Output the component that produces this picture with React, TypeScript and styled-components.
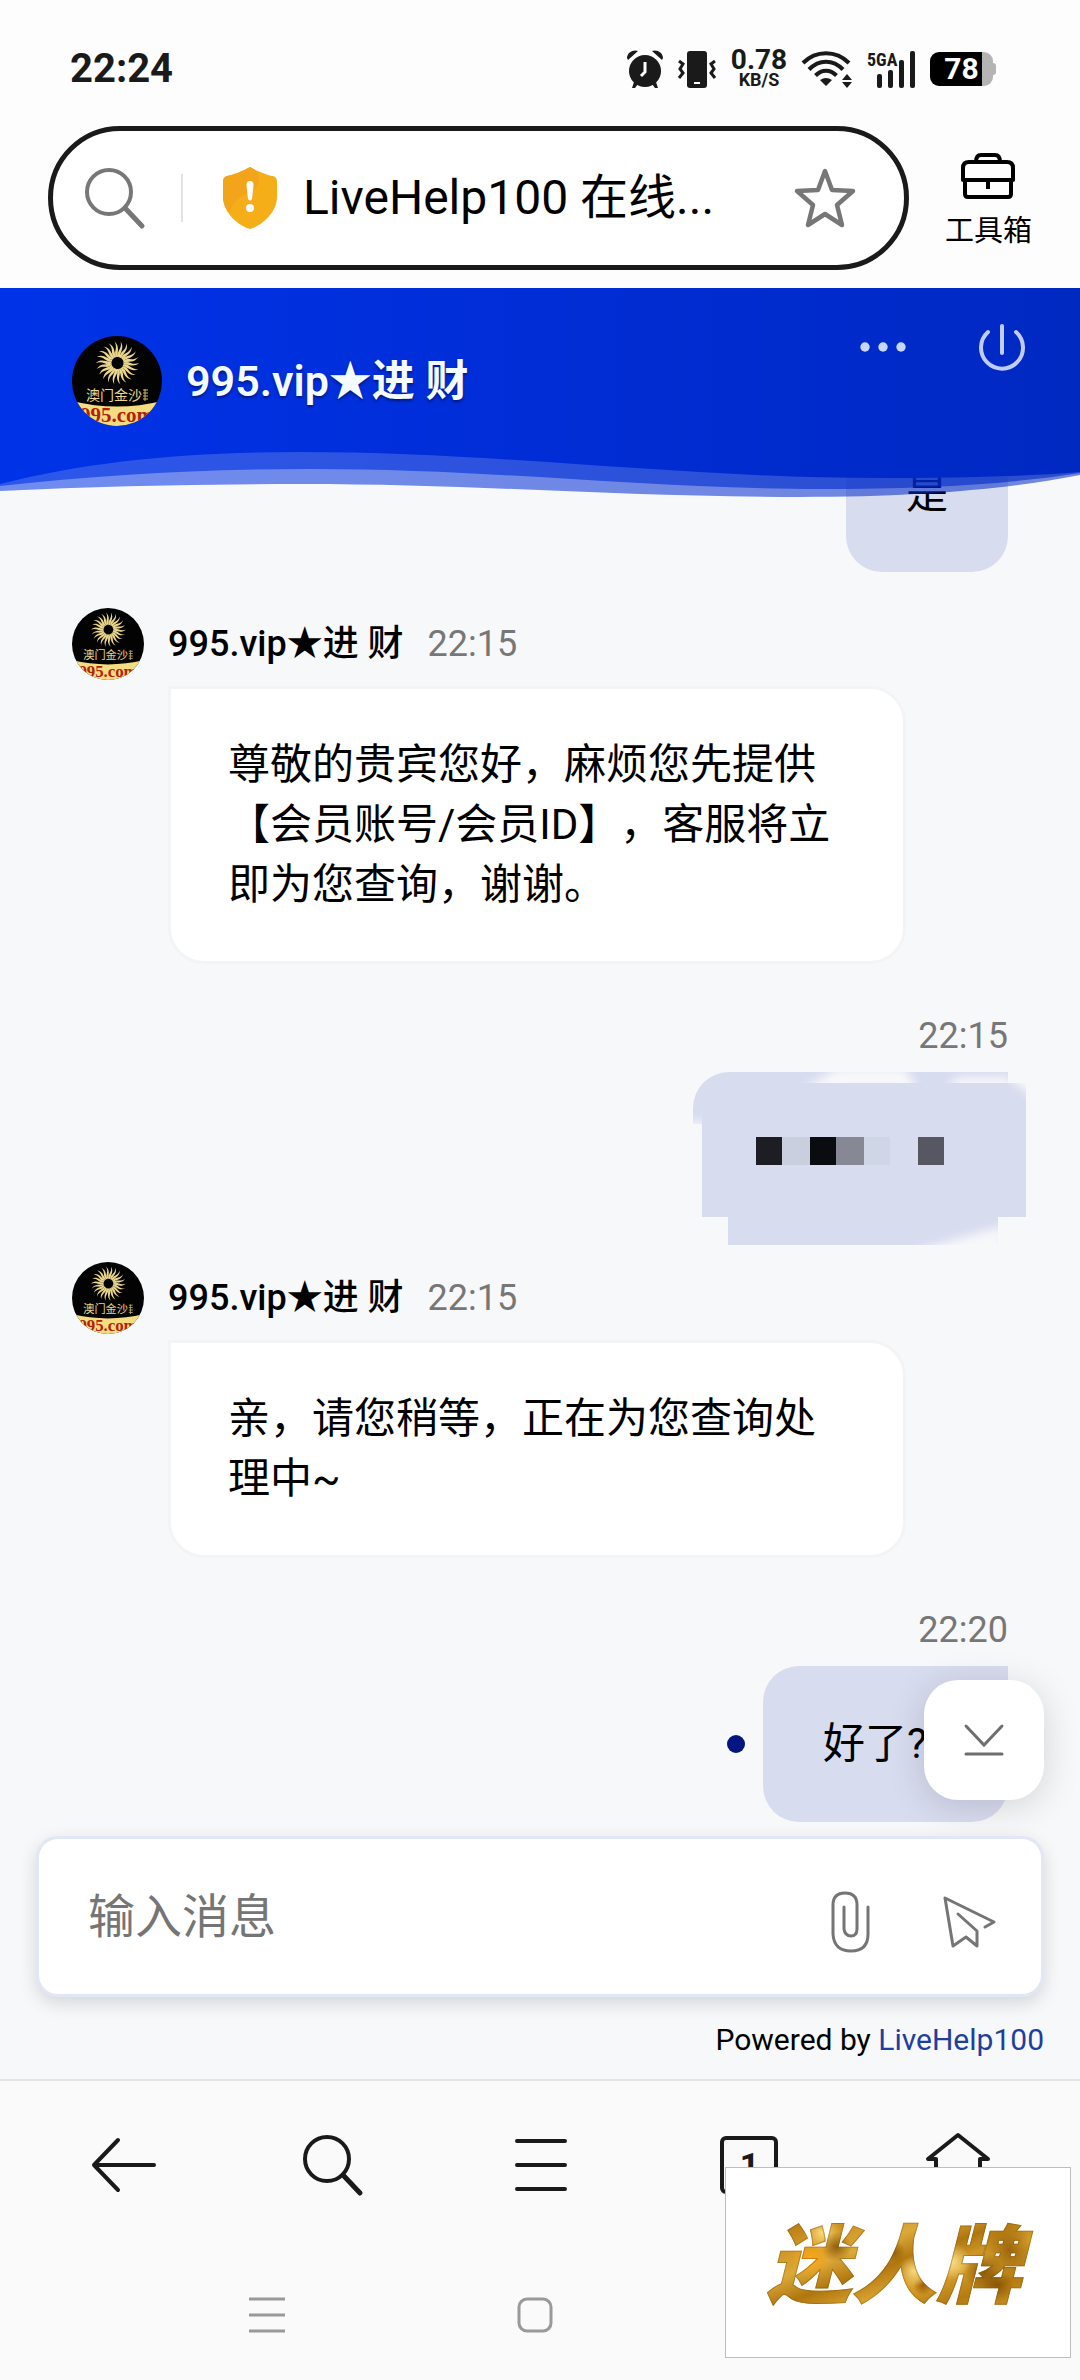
import React from "react";
import styled, { createGlobalStyle } from "styled-components";

const GlobalStyle = createGlobalStyle`
  * { box-sizing: border-box; }
  body {
    margin: 0;
    background: #fafafa;
    color: #000;
    font-family: Roboto, "Noto Sans CJK SC", sans-serif;
    text-spacing-trim: space-all;
  }
  button, input { font-family: inherit; color: inherit; }
  svg { display: block; flex: none; overflow: visible; }
`;

const Page = styled.div`
  display: flex;
  flex-direction: column;
  background: #fafafa;
`;

/* ---------- status bar ---------- */

const StatusBar = styled.div`
  display: flex;
  align-items: center;
  justify-content: space-between;
  height: 126px;
  padding: 12px 84px 0 70px;
  background: #fdfdfd;
  color: #1a1a1a;
`;

const Clock = styled.time`
  font-size: 40px;
  line-height: 48px;
  font-weight: 700;
`;

const StatusIcons = styled.div`
  display: flex;
  align-items: center;
  gap: 15px;
`;

const NetSpeed = styled.div`
  display: flex;
  flex-direction: column;
  align-items: center;
  width: 56px;
  font-weight: 700;
`;

const SpeedValue = styled.span`
  font-size: 28px;
  line-height: 22px;
`;

const SpeedUnit = styled.span`
  font-size: 18px;
  line-height: 18px;
`;

const Battery = styled.div`
  display: flex;
  align-items: center;
  justify-content: center;
  position: relative;
  width: 63px;
  height: 34px;
  margin-right: 3px;
  border-radius: 9px;
  background: linear-gradient(90deg, #000 52px, #b4b4b4 52px);
  color: #fff;
  font-size: 30px;
  line-height: 34px;
  font-weight: 700;

  &::after {
    content: "";
    position: absolute;
    left: 100%;
    width: 3px;
    height: 12px;
    border-radius: 0 3px 3px 0;
    background: #b4b4b4;
  }
`;

/* ---------- address bar ---------- */

const AddressRow = styled.div`
  display: flex;
  align-items: center;
  gap: 36px;
  padding: 0 48px 18px;
  background: #fdfdfd;
`;

const AddressBox = styled.div`
  display: flex;
  align-items: center;
  flex: 1;
  min-width: 0;
  height: 144px;
  padding: 0 49px 0 32px;
  border: 5px solid #1a1a1a;
  border-radius: 72px;
  background: #fff;
`;

const AddressDivider = styled.span`
  width: 2px;
  height: 48px;
  margin: 0 40px 0 36px;
  background: #e2e2e2;
`;

const AddressInput = styled.input`
  flex: 1;
  min-width: 0;
  height: 72px;
  padding: 0;
  margin-left: 26px;
  border: 0;
  outline: 0;
  background: transparent;
  font-size: 48px;
  line-height: 72px;
`;

const IconButton = styled.button`
  display: flex;
  align-items: center;
  justify-content: center;
  padding: 0;
  border: 0;
  background: transparent;
  cursor: pointer;
`;

const ToolboxButton = styled(IconButton)`
  flex-direction: column;
  gap: 12px;
  padding-top: 8px;
  font-size: 29px;
  line-height: 40px;
`;

/* ---------- chat header ---------- */

const ChatHeader = styled.header`
  position: relative;
  z-index: 1;
  display: flex;
  align-items: flex-start;
  height: 164px;
  padding: 0 54px 0 72px;
  background: linear-gradient(90deg, #0033e8, #002dd6 50%, #0029c2);
  color: #fff;
`;

const HeaderAgent = styled.div`
  display: flex;
  align-items: center;
  flex: 1;
  gap: 24px;
  padding-top: 48px;
`;

const HeaderName = styled.h1`
  margin: 0;
  font-size: 43px;
  line-height: 60px;
  font-weight: 600;
  color: #f4fbff;
  text-shadow: 0 2px 3px rgba(0, 0, 40, 0.5);
`;

const HeaderActions = styled.div`
  display: flex;
  align-items: center;
  gap: 72px;
  padding-top: 35px;
`;

const Waves = styled.svg`
  position: absolute;
  left: 0;
  top: 100%;
  width: 100%;
  height: 48px;
  margin-top: -1px;
  pointer-events: none;
`;

const AvatarFrame = styled.div<{ $size: number }>`
  flex: none;
  width: ${(p) => p.$size}px;
  height: ${(p) => p.$size}px;
  border-radius: 50%;
  overflow: hidden;
`;

/* ---------- messages ---------- */

const Chat = styled.main`
  position: relative;
  background: #f7f8fa;
`;

const MessageList = styled.div`
  display: flex;
  flex-direction: column;
  gap: 36px;
  margin-top: -36px;
  padding: 0 72px;
`;

const Incoming = styled.article`
  display: flex;
  flex-direction: column;
  gap: 6px;
`;

const MessageMeta = styled.div`
  display: flex;
  align-items: center;
  gap: 24px;
  height: 72px;
`;

const AgentName = styled.span`
  font-size: 36px;
  line-height: 48px;
  font-weight: 500;
`;

const MessageTime = styled.time`
  font-size: 36px;
  line-height: 48px;
  color: #777;
`;

const Bubble = styled.p`
  margin: 0;
  font-size: 42px;
  line-height: 60px;
`;

const AgentBubble = styled(Bubble)`
  margin: 0 102px 0 96px;
  padding: 46px 57px;
  border: 3px solid #f3f4f5;
  border-radius: 0 36px 36px 36px;
  background: #fff;
`;

const Outgoing = styled.article`
  display: flex;
  flex-direction: column;
  align-items: flex-end;
`;

const SentRow = styled.div`
  display: flex;
  align-items: center;
  gap: 18px;
`;

const UserBubble = styled(Bubble)<{ $minWidth?: number }>`
  min-width: ${(p) => p.$minWidth ?? 0}px;
  padding: 48px 60px;
  border-radius: 36px 0 36px 36px;
  background: #d8dcef;
`;

const UnreadDot = styled.span`
  width: 18px;
  height: 18px;
  border-radius: 50%;
  background: #001680;
`;

const Redacted = styled.div`
  height: 154px;
  margin-right: -18px;
`;

const ScrollDownButton = styled(IconButton)`
  position: absolute;
  right: 36px;
  bottom: 279px;
  width: 120px;
  height: 120px;
  border-radius: 34px;
  background: #fff;
  box-shadow: 0 6px 36px rgba(0, 0, 0, 0.15);
`;

/* ---------- composer ---------- */

const Composer = styled.form`
  display: flex;
  align-items: center;
  height: 161px;
  margin: 14px 36px 0;
  padding: 0 46px 0 49px;
  border: 3px solid #e1e7f5;
  border-radius: 22px;
  background: #fff;
  box-shadow: 0 6px 18px rgba(0, 0, 0, 0.14);
`;

const MessageInput = styled.input`
  flex: 1;
  min-width: 0;
  height: 72px;
  padding: 0;
  border: 0;
  outline: 0;
  background: transparent;
  font-size: 47px;
  line-height: 72px;

  &::placeholder { color: #757575; opacity: 1; }
`;

const ComposerActions = styled.div`
  display: flex;
  align-items: center;
  gap: 74px;
  padding-top: 10px;
`;

const PoweredBy = styled.p`
  margin: 0;
  padding: 21px 36px 17px;
  font-size: 30px;
  line-height: 44px;
  text-align: right;

  a { color: #1f3f9e; text-decoration: none; }
`;

/* ---------- bottom bars ---------- */

const BottomBars = styled.footer`
  position: relative;
  border-top: 2px solid #e2e4e8;
  background: #fafafa;
`;

const BrowserNav = styled.nav`
  display: grid;
  grid-template-columns: repeat(5, 1fr);
  height: 168px;
  padding: 0 18px 0 20px;
`;

const TabCount = styled(IconButton)`
  place-self: center;
  width: 58px;
  height: 58px;
  border: 4px solid #1a1a1a;
  border-radius: 6px;
  font-size: 34px;
  line-height: 36px;
  font-weight: 700;
  color: #1a1a1a;
`;

const SystemNav = styled.nav`
  display: grid;
  grid-template-columns: repeat(3, 1fr);
  height: 131px;
  padding: 0 143px 0 133px;
`;

const Watermark = styled.div`
  position: absolute;
  right: 9px;
  bottom: 22px;
  display: flex;
  align-items: center;
  justify-content: center;
  width: 346px;
  height: 191px;
  padding: 0 8px 8px 0;
  border: 1px solid #bdbdbd;
  background: #fff;
`;

const GoldText = styled.span`
  padding: 0 16px;
  font-family: "Noto Sans CJK SC", sans-serif;
  font-size: 85px;
  line-height: 120px;
  font-weight: 900;
  font-style: italic;
  color: transparent;
  -webkit-text-stroke: 1px rgba(110, 66, 0, 0.35);
  background:
    radial-gradient(circle at 21% 50%, rgba(255, 165, 20, 0.9), transparent 9%),
    radial-gradient(circle at 30% 40%, rgba(120, 70, 0, 0.7), transparent 7%),
    radial-gradient(circle at 25% 28%, rgba(255, 224, 130, 0.9), transparent 8%),
    radial-gradient(circle at 50% 44%, rgba(120, 72, 0, 0.6), transparent 7%),
    radial-gradient(circle at 57% 60%, rgba(255, 226, 140, 0.9), transparent 9%),
    radial-gradient(circle at 60% 72%, rgba(140, 66, 0, 0.7), transparent 5%),
    radial-gradient(circle at 70% 52%, rgba(255, 232, 150, 0.9), transparent 9%),
    radial-gradient(circle at 81% 60%, rgba(110, 62, 0, 0.7), transparent 8%),
    radial-gradient(circle at 90% 42%, rgba(130, 76, 0, 0.7), transparent 9%),
    radial-gradient(circle at 86% 72%, rgba(110, 62, 0, 0.6), transparent 6%),
    linear-gradient(160deg, #a86e08 12%, #cf9524 28%, #dba93a 40%, #b0760e 52%, #d9a32e 64%, #b57c12 78%, #d39a2c);
  -webkit-background-clip: text;
  background-clip: text;
`;

/* ---------- drawings ---------- */

const rays = Array.from({ length: 22 }, (_, i) => (i * 360) / 22);

function Avatar({ size }: { size: number }) {
  return (
    <AvatarFrame $size={size}>
      <svg width={size} height={size} viewBox="0 0 90 90" role="img" aria-label="澳门金沙 995.com">
        <rect width="90" height="90" fill="#030303" />
        <g transform="translate(45.500 27)" fill="#e9d68a">
          {rays.map((a) => (
            <path key={a} transform={`rotate(${a})`} d="M-1-6C-5-11 1-14-3-21.500C3-16-1-11 .8-6Z" />
          ))}
        </g>
        <text x="14" y="64" fontSize="14" fill="#e9d68a">澳门金沙</text>
        <path d="M71 54h5M71 57h5M71 60h5M71 63h5M73 53v12" stroke="#c9b66a" fill="none" />
        <path d="M0 65Q45 76 90 65V90H0Z" fill="#f3dd80" />
        <text x="45" y="86" fontSize="21" fontWeight="700" textAnchor="middle" fill="#b3200c" fontFamily="Liberation Serif, serif">995.com</text>
      </svg>
    </AvatarFrame>
  );
}

const AlarmIcon = () => (
  <svg width="36" height="38" viewBox="0 0 36 38" fill="#1a1a1a">
    <circle cx="18" cy="21" r="16" />
    <path d="M0 8C0 2 7-1 11 1L1 10ZM36 8C36 2 29-1 25 1L35 10ZM7 32L5 38H8L11 34ZM29 32L31 38H28L25 34Z" />
    <path d="M18 12V22L14 26" fill="none" stroke="#fff" strokeWidth="3" />
  </svg>
);

const VibrateIcon = () => (
  <svg width="38" height="37" viewBox="0 0 38 37">
    <rect x="9" y="0" width="20" height="37" rx="3" fill="#1a1a1a" />
    <path d="M16 32h6" stroke="#fff" strokeWidth="2" />
    <path d="M1 10l4 3-3 5 3 4-4 5M37 10l-4 3 3 5-3 4 4 5" stroke="#1a1a1a" strokeWidth="3" fill="none" />
  </svg>
);

const WifiIcon = () => (
  <svg width="50" height="36" viewBox="0 0 50 36">
    <g fill="none" stroke="#1a1a1a" strokeWidth="4">
      <path d="M1 12C14-1 34-1 47 12M7 18.500C17 8 31 8 41 18.500M13.500 24.500C20 18 28 18 34.500 24.500" />
    </g>
    <path d="M18 29Q24 25 30 29L24 35ZM40 29l5-6 5 6zM40 31l5 6 5-6z" fill="#1a1a1a" />
  </svg>
);

const SignalIcon = () => (
  <svg width="48" height="37" viewBox="0 0 48 37" fill="#1a1a1a">
    <text x="0" y="15" fontSize="18" fontWeight="700" fontFamily="Liberation Sans Narrow, Roboto Condensed, Roboto, sans-serif">5GA</text>
    <rect x="10" y="23" width="5" height="14" rx="2" />
    <rect x="21" y="19" width="5" height="18" rx="2" />
    <rect x="32" y="9" width="5" height="28" rx="2" />
    <rect x="43" y="0" width="5" height="37" rx="2" />
  </svg>
);

const SearchIcon = ({ color, width }: { color: string; width: number }) => (
  <svg width="60" height="60" viewBox="0 0 60 60" fill="none" stroke={color} strokeWidth={width} strokeLinecap="round">
    <circle cx="24" cy="24" r="22" />
    <path d="M40 40L57 58" strokeWidth={width + 1} />
  </svg>
);

const ShieldIcon = () => (
  <svg width="54" height="62" viewBox="0 0 54 62">
    <path d="M27 0C34 4 44 8 50 9Q54 10 54 15V30C54 46 38 59 27 62C16 59 0 46 0 30V15Q0 10 4 9C10 8 20 4 27 0Z" fill="#f5ad18" />
    <path d="M27 0C34 4 38 8 35 18C32 27 12 25 7 46Q0 39 0 30V15Q0 10 4 9C10 8 20 4 27 0Z" fill="#f2a51a" />
    <path d="M23.500 18Q23.500 14 27 14T30.500 18L29 32Q27 35 25 32Z" fill="#fff" />
    <circle cx="27" cy="41" r="4" fill="#fff" />
  </svg>
);

const StarIcon = () => (
  <svg width="60" height="60" viewBox="0 0 60 60" fill="none" stroke="#777" strokeWidth="4.500" strokeLinejoin="round">
    <path d="M30 3L37 22L58 23L42 37L47 57L30 46L13 57L18 37L2 23L23 22Z" />
  </svg>
);

const ToolboxIcon = () => (
  <svg width="54" height="46" viewBox="0 0 54 46" fill="none" stroke="#000" strokeWidth="4" strokeLinejoin="round">
    <path d="M2 27V15Q2 9 8 9H46Q52 9 52 15V27ZM4 27V41Q4 44 7 44H47Q50 44 50 41V27M15 9Q15 2 20 2H34Q39 2 39 9M27 27v9" />
  </svg>
);

const DotsIcon = () => (
  <svg width="46" height="10" viewBox="0 0 46 10" fill="#c8d5ff">
    <circle cx="5" cy="5" r="4.700" />
    <circle cx="23" cy="5" r="4.700" />
    <circle cx="41" cy="5" r="4.700" />
  </svg>
);

const PowerIcon = () => (
  <svg width="48" height="48" viewBox="0 0 48 48" fill="none" stroke="#c0cdfb" strokeWidth="4" strokeLinecap="round">
    <path d="M10 9A21 21 0 1 0 38 9M24 3V30" />
  </svg>
);

const MosaicBubble = () => (
  <svg width="333" height="173" viewBox="0 0 333 173" role="img" aria-label="打码消息">
    <defs>
      <filter id="soft" x="-20%" y="-60%" width="140%" height="220%">
        <feGaussianBlur stdDeviation="5" />
      </filter>
      <clipPath id="topEdge"><rect x="90" y="0" width="225" height="11" /></clipPath>
      <clipPath id="sideEdge"><path d="M315 11H333V60H315ZM0 38H9V70H0ZM170 145H305V173H170Z" /></clipPath>
    </defs>
    <path d="M0 36A36 36 0 0 1 36 0H315V11H333V145H305V173H35V145H9V52H0Z" fill="#d8dcef" />
    <g clipPath="url(#topEdge)">
      <path d="M105 20L145 -4H212L226 20ZM250 20L265 5H318V20Z" fill="#f7f8fa" filter="url(#soft)" />
    </g>
    <g clipPath="url(#sideEdge)" fill="#f7f8fa">
      <path d="M308 0H345V28ZM-5 50H14V75H-5ZM225 178L310 154V185H225Z" filter="url(#soft)" />
    </g>
    <g>
      <rect x="63" y="65" width="26" height="28" fill="#1d1d24" />
      <rect x="89" y="65" width="28" height="28" fill="#c9cfdf" />
      <rect x="117" y="65" width="26" height="28" fill="#0a0c10" />
      <rect x="143" y="65" width="28" height="28" fill="#868894" />
      <rect x="171" y="65" width="26" height="28" fill="#cfd6e6" />
      <rect x="225" y="65" width="26" height="28" fill="#565760" />
    </g>
  </svg>
);

const DownIcon = () => (
  <svg width="40" height="34" viewBox="0 0 40 34" fill="none" stroke="#6e6e6e" strokeWidth="3" strokeLinecap="round">
    <path d="M2 3L20 22L38 3M2 31H38" />
  </svg>
);

const ClipIcon = () => (
  <svg width="38" height="62" viewBox="0 0 38 62" fill="none" stroke="#757575" strokeWidth="3" strokeLinecap="round">
    <path d="M37 16V43Q37 60 20 60T2 43V14Q2 2 14 2T26 14V38Q26 45 20 45T13 38V16" />
  </svg>
);

const SendIcon = () => (
  <svg width="52" height="52" viewBox="0 0 52 52" fill="none" stroke="#757575" strokeWidth="3" strokeLinejoin="round" strokeLinecap="round">
    <path d="M42 31L51 26L2 2L10 50L23 41L34 50V35L15 18" />
  </svg>
);

const BackIcon = () => (
  <svg width="64" height="54" viewBox="0 0 64 54" fill="none" stroke="#1a1a1a" strokeWidth="4" strokeLinecap="round" strokeLinejoin="round">
    <path d="M26 2L2 27L26 52M2 27H62" />
  </svg>
);

const MenuIcon = () => (
  <svg width="52" height="54" viewBox="0 0 52 54" stroke="#1a1a1a" strokeWidth="4" strokeLinecap="round">
    <path d="M2 3H50M2 27H50M2 51H50" />
  </svg>
);

const HomeIcon = () => (
  <svg width="64" height="64" viewBox="0 0 64 64" fill="none" stroke="#1a1a1a" strokeWidth="4" strokeLinecap="round" strokeLinejoin="round">
    <path d="M32 2L2 26H10V60H54V26H62Z" />
  </svg>
);

const RecentsIcon = () => (
  <svg width="36" height="36" viewBox="0 0 36 36" stroke="#999" strokeWidth="3">
    <path d="M0 2H36M0 18H36M0 34H36" />
  </svg>
);

const SquareIcon = () => (
  <svg width="36" height="36" viewBox="0 0 36 36" fill="none" stroke="#999" strokeWidth="3">
    <rect x="2" y="2" width="32" height="32" rx="8" />
  </svg>
);

const TriangleIcon = () => (
  <svg width="36" height="36" viewBox="0 0 36 36" fill="none" stroke="#999" strokeWidth="3">
    <path d="M30 3V33L5 18Z" />
  </svg>
);

const HeaderWaves = () => (
  <Waves viewBox="0 0 1080 48" preserveAspectRatio="none" aria-hidden="true">
    <defs>
      <linearGradient id="blue" gradientUnits="userSpaceOnUse" x1="0" y1="0" x2="1080" y2="0">
        <stop offset="0" stopColor="#0033e8" />
        <stop offset=".5" stopColor="#002dd6" />
        <stop offset="1" stopColor="#0029c2" />
      </linearGradient>
    </defs>
    <g fill="url(#blue)">
      <path opacity=".55" d="M0 0V40C100 35 200 33 300 33C480 33 620 46 800 46C920 46 1010 38 1080 24V0Z" />
      <path opacity=".6" d="M0 0V35C100 24 200 18 310 18C500 18 640 38 820 38C930 38 1010 33 1080 22V0Z" />
      <path d="M0 0V33C90 10 190 1 300 1C500 1 680 27 880 27C950 27 1020 26 1080 21V0Z" />
    </g>
  </Waves>
);

/* ---------- page ---------- */

const AGENT = "995.vip★进 财";

function AgentMessage({ time, children }: { time: string; children: React.ReactNode }) {
  return (
    <Incoming>
      <MessageMeta>
        <Avatar size={72} />
        <AgentName>{AGENT}</AgentName>
        <MessageTime>{time}</MessageTime>
      </MessageMeta>
      <AgentBubble>{children}</AgentBubble>
    </Incoming>
  );
}

function UserMessage({ time, children }: { time?: string; children: React.ReactNode }) {
  return (
    <Outgoing>
      {time && (
        <MessageMeta>
          <MessageTime>{time}</MessageTime>
        </MessageMeta>
      )}
      {children}
    </Outgoing>
  );
}

export default function App() {
  return (
    <Page>
      <GlobalStyle />
      <StatusBar>
        <Clock>22:24</Clock>
        <StatusIcons>
          <AlarmIcon />
          <VibrateIcon />
          <NetSpeed>
            <SpeedValue>0.78</SpeedValue>
            <SpeedUnit>KB/S</SpeedUnit>
          </NetSpeed>
          <WifiIcon />
          <SignalIcon />
          <Battery>78</Battery>
        </StatusIcons>
      </StatusBar>

      <AddressRow>
        <AddressBox>
          <SearchIcon color="#777" width={4} />
          <AddressDivider />
          <ShieldIcon />
          <AddressInput aria-label="网址" readOnly value="LiveHelp100 在线..." />
          <IconButton type="button" aria-label="收藏"><StarIcon /></IconButton>
        </AddressBox>
        <ToolboxButton type="button">
          <ToolboxIcon />
          工具箱
        </ToolboxButton>
      </AddressRow>

      <ChatHeader>
        <HeaderAgent>
          <Avatar size={90} />
          <HeaderName>{AGENT}</HeaderName>
        </HeaderAgent>
        <HeaderActions>
          <IconButton type="button" aria-label="更多"><DotsIcon /></IconButton>
          <IconButton type="button" aria-label="结束会话"><PowerIcon /></IconButton>
        </HeaderActions>
        <HeaderWaves />
      </ChatHeader>

      <Chat>
        <MessageList>
          <UserMessage>
            <UserBubble>是</UserBubble>
          </UserMessage>
          <AgentMessage time="22:15">
            尊敬的贵宾您好，麻烦您先提供【会员账号/会员ID】，客服将立即为您查询，谢谢。
          </AgentMessage>
          <UserMessage time="22:15">
            <Redacted><MosaicBubble /></Redacted>
          </UserMessage>
          <AgentMessage time="22:15">亲，请您稍等，正在为您查询处理中~</AgentMessage>
          <UserMessage time="22:20">
            <SentRow>
              <UnreadDot />
              <UserBubble $minWidth={245}>好了?</UserBubble>
            </SentRow>
          </UserMessage>
        </MessageList>
        <ScrollDownButton type="button" aria-label="滚动到底部"><DownIcon /></ScrollDownButton>

        <Composer onSubmit={(e) => e.preventDefault()}>
          <MessageInput aria-label="输入消息" placeholder="输入消息" />
          <ComposerActions>
            <IconButton type="button" aria-label="附件"><ClipIcon /></IconButton>
            <IconButton type="submit" aria-label="发送"><SendIcon /></IconButton>
          </ComposerActions>
        </Composer>
        <PoweredBy>
          Powered by <a href="#livehelp100">LiveHelp100</a>
        </PoweredBy>
      </Chat>

      <BottomBars>
        <BrowserNav>
          <IconButton type="button" aria-label="返回"><BackIcon /></IconButton>
          <IconButton type="button" aria-label="搜索"><SearchIcon color="#1a1a1a" width={4} /></IconButton>
          <IconButton type="button" aria-label="菜单"><MenuIcon /></IconButton>
          <TabCount type="button" aria-label="标签页">1</TabCount>
          <IconButton type="button" aria-label="主页"><HomeIcon /></IconButton>
        </BrowserNav>
        <SystemNav>
          <IconButton type="button" aria-label="最近任务"><RecentsIcon /></IconButton>
          <IconButton type="button" aria-label="桌面"><SquareIcon /></IconButton>
          <IconButton type="button" aria-label="系统返回"><TriangleIcon /></IconButton>
        </SystemNav>
        <Watermark><GoldText>迷人牌</GoldText></Watermark>
      </BottomBars>
    </Page>
  );
}
